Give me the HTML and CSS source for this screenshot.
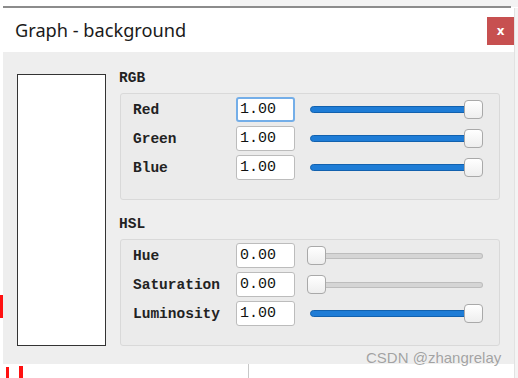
FILE: index.html
```
<!DOCTYPE html>
<html lang="en">
<head>
    <meta charset="UTF-8">
    <title>Graph - background</title>
    <link rel="stylesheet" href="styles.css">
</head>
<body>
    <div class="desktop">
        <div class="bg-top"></div>
        <div class="bg-line"></div>
        <div class="bg-right"></div>
        <div class="bg-bottom">
            <span class="mark mark-a"></span>
            <span class="mark mark-b"></span>
            <span class="vline"></span>
        </div>
        <span class="mark mark-left"></span>

        <div class="dialog">
            <div class="titlebar">
                <span class="title">Graph - background</span>
                <button class="close">x</button>
            </div>
            <div class="dialog-body">
                <div class="preview"></div>
                <div class="controls">
                    <div class="section-title">RGB</div>
                    <div class="group">
                        <div class="row">
                            <label>Red</label>
                            <input class="num focused" value="1.00">
                            <div class="slider"><div class="fill" style="width: 100%"></div><div class="thumb"></div><div class="rest"></div></div>
                        </div>
                        <div class="row">
                            <label>Green</label>
                            <input class="num" value="1.00">
                            <div class="slider"><div class="fill" style="width: 100%"></div><div class="thumb"></div><div class="rest"></div></div>
                        </div>
                        <div class="row">
                            <label>Blue</label>
                            <input class="num" value="1.00">
                            <div class="slider"><div class="fill" style="width: 100%"></div><div class="thumb"></div><div class="rest"></div></div>
                        </div>
                    </div>

                    <div class="section-title hsl">HSL</div>
                    <div class="group">
                        <div class="row">
                            <label>Hue</label>
                            <input class="num" value="0.00">
                            <div class="slider"><div class="fill" style="width: 0%"></div><div class="thumb"></div><div class="rest"></div></div>
                        </div>
                        <div class="row">
                            <label>Saturation</label>
                            <input class="num" value="0.00">
                            <div class="slider"><div class="fill" style="width: 0%"></div><div class="thumb"></div><div class="rest"></div></div>
                        </div>
                        <div class="row">
                            <label>Luminosity</label>
                            <input class="num" value="1.00">
                            <div class="slider"><div class="fill" style="width: 100%"></div><div class="thumb"></div><div class="rest"></div></div>
                        </div>
                    </div>
                </div>
            </div>
        </div>

        <div class="watermark">CSDN @zhangrelay</div>
    </div>
</body>
</html>
```
FILE: styles.css
```
body {
    margin: 0;
    background: #ffffff;
    font-family: 'Liberation Sans', Arial, sans-serif;
}

.desktop {
    position: relative;
    width: 518px;
    height: 378px;
    overflow: hidden;
    background: #ffffff;
}

/* background app pieces peeking out behind the dialog */
.bg-top {
    position: absolute;
    left: 230px;
    top: 0;
    width: 288px;
    height: 7px;
    background: #f3f3f3;
}

.bg-line {
    position: absolute;
    left: 3px;
    top: 6px;
    width: 508px;
    height: 2px;
    background: #8c8c8c;
}

.bg-right {
    position: absolute;
    left: 514px;
    top: 8px;
    width: 4px;
    height: 370px;
    background: #f4f4f4;
    border-left: 1px solid #e2e2e2;
}

.bg-bottom {
    position: absolute;
    left: 0;
    top: 364px;
    width: 518px;
    height: 14px;
}

.vline {
    position: absolute;
    left: 248px;
    top: 0;
    width: 1px;
    height: 14px;
    background: #c8c8c8;
}

.mark {
    position: absolute;
    background: #ff1010;
}

.mark-a { left: 6px; top: 3px; width: 3px; height: 11px; }
.mark-b { left: 19px; top: 2px; width: 4px; height: 12px; }
.mark-left { left: 0; top: 295px; width: 3px; height: 23px; }

.dialog {
    position: absolute;
    left: 3px;
    top: 8px;
    width: 511px;
    height: 356px;
    background: #eeeeee;
    display: flex;
    flex-direction: column;
}

.titlebar {
    height: 44px;
    background: #ffffff;
    display: flex;
    align-items: center;
    justify-content: space-between;
    padding-left: 12px;
}

.title {
    font-family: 'Noto Sans', sans-serif;
    font-size: 18.2px;
    color: #1a1a1a;
    margin-top: -1px;
}

.close {
    width: 27px;
    height: 28px;
    margin-top: 1px;
    border: none;
    background: #c75050;
    color: #ffffff;
    font-family: 'DejaVu Sans', sans-serif;
    font-weight: bold;
    font-size: 12px;
    padding: 0;
}

.dialog-body {
    flex: 1;
    display: flex;
    padding: 22px 14px 0 14px;
    gap: 14px;
}

.preview {
    width: 87px;
    height: 270px;
    background: #ffffff;
    border: 1px solid #333333;
}

.controls {
    width: 380px;
}

.section-title,
.row label {
    font-family: 'Liberation Mono', monospace;
    font-weight: bold;
    font-size: 14.5px;
    color: #222222;
}

.section-title {
    height: 22px;
    line-height: 14px;
    margin-top: -3px;
    margin-left: -1px;
}

.section-title.hsl {
    margin-top: 17px;
    height: 22px;
}

.group {
    border: 1px solid #d9d9d9;
    border-radius: 3px;
    background: #ebebeb;
    padding: 3px 15px 19px 12px;
    display: flex;
    flex-direction: column;
    gap: 4px;
}

.row {
    display: flex;
    align-items: center;
    height: 25px;
}

.row label {
    width: 103px;
}

.num {
    box-sizing: border-box;
    width: 59px;
    height: 25px;
    border: 1px solid #bcbcbc;
    border-radius: 3px;
    background: #ffffff;
    padding: 0 0 0 3px;
    font-family: 'Liberation Mono', monospace;
    font-size: 15px;
    color: #111111;
    outline: none;
}

.num.focused {
    border: 2px solid #74aee8;
    padding-left: 2px;
}

.slider {
    margin-left: 15px;
    width: 173px;
    height: 19px;
    display: flex;
    align-items: center;
}

.fill {
    box-sizing: border-box;
    height: 7px;
    background: #1e7cd6;
    border: 1px solid #1261ae;
    border-radius: 4px;
    margin-right: -5px;
    flex-shrink: 1;
}

.thumb {
    box-sizing: border-box;
    width: 19px;
    height: 19px;
    flex-shrink: 0;
    background: linear-gradient(#ffffff, #eeeeee);
    border: 1px solid #a9a9a9;
    border-radius: 4px;
    position: relative;
}

.rest {
    flex: 1;
    box-sizing: border-box;
    height: 6px;
    background: #d5d5d5;
    border: 1px solid #bdbdbd;
    border-left: none;
    border-radius: 0 3px 3px 0;
    margin-left: -1px;
}

.watermark {
    position: absolute;
    left: 366px;
    top: 349px;
    font-family: 'Liberation Sans', Arial, sans-serif;
    font-size: 15px;
    color: rgba(110, 110, 110, 0.6);
}
```
